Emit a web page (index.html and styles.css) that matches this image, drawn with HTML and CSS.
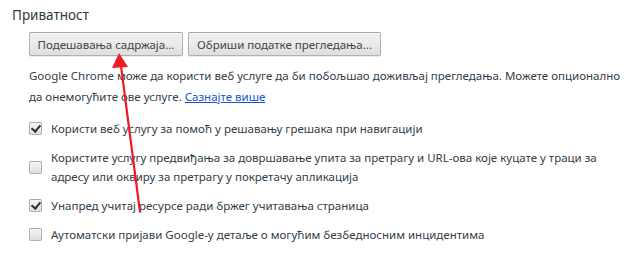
FILE: index.html
```html
<!DOCTYPE html>
<html lang="sr">
<head>
    <meta charset="UTF-8">
    <title>Приватност</title>
    <link rel="stylesheet" href="styles.css">
</head>
<body>

    <section class="privacy">
        <h3 class="section-title">Приватност</h3>

        <div class="section-body">
            <div class="button-row">
                <button class="btn btn-content">Подешавања садржаја...</button>
                <button class="btn btn-clear">Обриши податке прегледања...</button>
            </div>

            <p class="description">
                Google Chrome може да користи веб услуге да би побољшао доживљај прегледања. Можете опционално<br>
                да онемогућите ове услуге. <a href="#">Сазнајте више</a>
            </p>

            <label class="check-row">
                <span class="checkbox checked"></span>
                <span class="check-label">Користи веб услугу за помоћ у решавању грешака при навигацији</span>
            </label>

            <label class="check-row">
                <span class="checkbox"></span>
                <span class="check-label">Користите услугу предвиђања за довршавање упита за претрагу и URL-ова које куцате у траци за адресу или оквиру за претрагу у покретачу апликација</span>
            </label>

            <label class="check-row">
                <span class="checkbox checked"></span>
                <span class="check-label">Унапред учитај ресурсе ради бржег учитавања страница</span>
            </label>

            <label class="check-row">
                <span class="checkbox"></span>
                <span class="check-label">Аутоматски пријави Google-у детаље о могућим безбедносним инцидентима</span>
            </label>
        </div>
    </section>

    <!-- red arrow drawn over the page -->
    <svg class="arrow" width="637" height="253" viewBox="0 0 637 253">
        <line x1="140" y1="212" x2="121" y2="66" stroke="#ee1c25" stroke-width="2.2"/>
        <polygon points="119,53 112,68 128,67" fill="#ee1c25"/>
    </svg>

</body>
</html>
```

FILE: styles.css
```css
body {
    margin: 0;
    padding: 0;
    background-color: #fff;
    font-family: "Noto Sans", "Open Sans", sans-serif;
    font-size: 11.5px;
    color: #333d47;
    position: relative;
    width: 637px;
    height: 253px;
    overflow: hidden;
}

.privacy {
    padding: 5px 0 0 12px;
}

.section-title {
    margin: 0;
    font-size: 13.5px;
    font-weight: normal;
    line-height: 20px;
    color: #303942;
}

.section-body {
    padding-left: 17px;
}

.button-row {
    display: flex;
    gap: 5px;
    margin-top: 7px;
}

.btn {
    height: 24px;
    padding: 0 4px;
    font-family: inherit;
    font-size: 11.5px;
    color: #444;
    white-space: nowrap;
    background: linear-gradient(#ededed, #ededed 38%, #dedede);
    border: 1px solid rgba(0, 0, 0, 0.25);
    border-radius: 2px;
    box-shadow: 0 1px 0 rgba(0, 0, 0, 0.08), inset 0 1px 2px rgba(255, 255, 255, 0.75);
}

.btn-content {
    width: 154px;
}

.btn-clear {
    width: 193px;
}

.description {
    margin: 9px 0 0 0;
    line-height: 21px;
    white-space: nowrap;
}

.description a {
    color: #15c;
    text-decoration: underline;
}

.check-row {
    display: flex;
    align-items: center;
    gap: 9px;
    line-height: 19px;
    margin-top: 10px;
}

.description + .check-row {
    margin-top: 12px;
}

.checkbox {
    flex: none;
    position: relative;
    width: 11px;
    height: 11px;
    border: 1px solid rgba(0, 0, 0, 0.25);
    border-radius: 2px;
    background: linear-gradient(#ededed, #ededed 38%, #dedede);
    box-shadow: inset 0 1px 2px rgba(255, 255, 255, 0.75);
}

.checkbox.checked::after {
    content: "";
    position: absolute;
    left: 3px;
    top: 0px;
    width: 4px;
    height: 7px;
    border: solid #333;
    border-width: 0 2px 2px 0;
    transform: rotate(40deg);
}

.arrow {
    position: absolute;
    left: 0;
    top: 0;
    pointer-events: none;
}
```
